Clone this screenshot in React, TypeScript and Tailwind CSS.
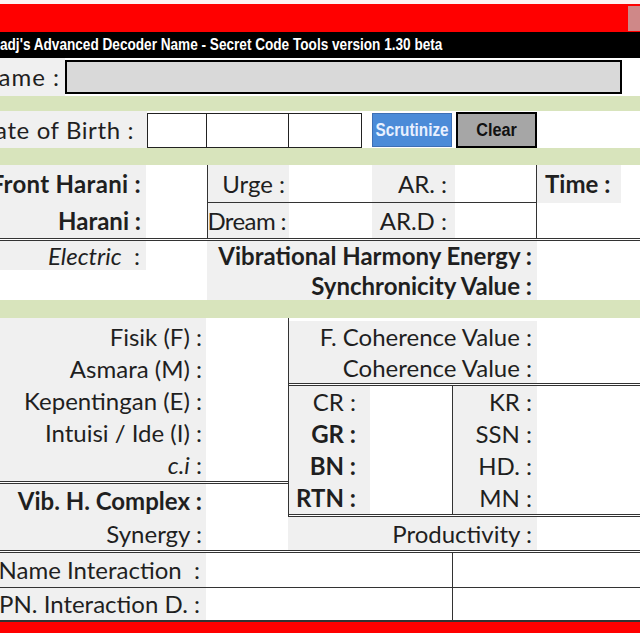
import type { ReactNode } from 'react';

// label cell: grey background, text pushed to the right edge
function Lab({ className = '', children }: { className?: string; children?: ReactNode }) {
  return (
    <div
      className={`flex items-center justify-end whitespace-nowrap bg-[#f0f0f0] leading-none ${className}`}
    >
      {children}
    </div>
  );
}

function DoubleLine({ className = '' }: { className?: string }) {
  return <div className={`h-[3px] border-y border-[#333] bg-white ${className}`} />;
}

export default function App() {
  return (
    <div className="h-[640px] w-[640px] overflow-hidden bg-white font-['Lato',sans-serif] text-[24px] text-[#1f1f1f]">
      {/* window chrome */}
      <div className="h-[4px] bg-[#fdf2f2]" />
      <div className="flex h-[28px] items-center justify-end bg-[#ff0000]">
        <div className="h-[25px] w-[12px] bg-[#cf8888]" />
      </div>
      <div className="flex h-[26px] items-center overflow-hidden bg-black">
        <span className="block origin-left scale-x-[0.85] whitespace-nowrap font-['Liberation_Sans',Arial,sans-serif] text-[16px] font-bold text-white">
          adj's Advanced Decoder Name - Secret Code Tools version 1.30 beta
        </span>
      </div>

      {/* Name */}
      <div className="flex h-[38px] items-center">
        <Lab className="h-full w-[65px] pr-[5px] tracking-[1px]">Name :</Lab>
        <div className="h-[34px] w-[557px] border-2 border-black bg-[#d9d9d9]" />
      </div>
      <div className="h-[15px] bg-[#d8e4bc]" />

      {/* Date of birth */}
      <div className="flex h-[37px]">
        <Lab className="h-full w-[147px] pr-[13px] tracking-[0.6px]">Date of Birth :</Lab>
        <div className="mt-[2px] flex h-[35px] border-y-[1.5px] border-[#222]">
          <div className="w-[60px] border-x-[1.5px] border-[#222]" />
          <div className="w-[82px] border-r-[1.5px] border-[#222]" />
          <div className="w-[73px] border-r-[1.5px] border-[#222]" />
        </div>
        <button className="ml-[10px] mt-[2px] flex h-[34px] w-[80px] items-center justify-center overflow-hidden border border-[#3d6fb5] bg-[#4b8bd8]">
          <span className="block scale-x-[0.85] whitespace-nowrap font-['Liberation_Sans',Arial,sans-serif] text-[18px] font-bold text-[#e8f0ff]">
            Scrutinize
          </span>
        </button>
        <button className="ml-[4px] mt-[1px] flex h-[36px] w-[81px] items-center justify-center border-2 border-black bg-[#a6a6a6]">
          <span className="block scale-x-[0.9] font-['Liberation_Sans',Arial,sans-serif] text-[18px] font-bold text-[#111]">
            Clear
          </span>
        </button>
      </div>
      <div className="h-[17px] bg-[#d8e4bc]" />

      {/* Harani */}
      <div className="grid h-[73px] grid-cols-[146px_61px_82px_83px_83px_82px_1fr] grid-rows-[38px_35px]">
        <Lab className="pr-[5px] font-bold tracking-[0.3px]">Front Harani :</Lab>
        <div />
        <Lab className="border-b border-l border-[#333] pr-[4px]">Urge :</Lab>
        <div className="border-b border-[#333]" />
        <Lab className="border-b border-[#333] pr-[8px]">AR. :</Lab>
        <div className="border-b border-r border-[#333]" />
        <div className="flex">
          <div className="flex w-[84px] items-center bg-[#f0f0f0] pl-[8px] font-bold leading-none">Time :</div>
        </div>
        <Lab className="pr-[5px] font-bold">Harani :</Lab>
        <div />
        <Lab className="border-l border-[#333] pr-[3px] tracking-[-0.6px]">Dream :</Lab>
        <div />
        <Lab className="pr-[8px]">AR.D :</Lab>
        <div className="border-r border-[#333]" />
        <div />
      </div>
      <DoubleLine />

      {/* Electric */}
      <div className="grid h-[59px] grid-cols-[146px_61px_330px_1fr] grid-rows-[29px_30px]">
        <Lab className="pr-[6px]">
          <span className="italic">Electric</span>&nbsp;&nbsp;:
        </Lab>
        <div className="row-span-2" />
        <div className="row-span-2 flex flex-col items-end justify-center bg-[#f0f0f0] pr-[5px] font-bold leading-[30px]">
          <span>Vibrational Harmony Energy :</span>
          <span>Synchronicity Value :</span>
        </div>
        <div className="row-span-2" />
        <div />
      </div>
      <div className="h-[18px] bg-[#d8e4bc]" />

      {/* Main values */}
      <div className="flex h-[232px]">
        <div className="flex w-[288px] flex-col">
          <div className="flex h-[163px]">
            <div className="flex w-[206px] flex-col bg-[#f0f0f0] pt-[3px]">
              <Lab className="h-[32px] pr-[4px]">Fisik (F) :</Lab>
              <Lab className="h-[32px] pr-[4px]">Asmara (M) :</Lab>
              <Lab className="h-[32px] pr-[4px]">Kepentingan (E) :</Lab>
              <Lab className="h-[32px] pr-[4px]">Intuisi / Ide (I) :</Lab>
              <Lab className="h-[32px] pr-[4px]">
                <span className="italic">c.i</span>&nbsp;:
              </Lab>
            </div>
          </div>
          <DoubleLine />
          <div className="flex h-[66px] w-[206px] flex-col bg-[#f0f0f0]">
            <Lab className="h-[33px] pr-[4px] font-bold">Vib. H. Complex :</Lab>
            <Lab className="h-[33px] pr-[4px]">Synergy :</Lab>
          </div>
        </div>

        <div className="flex flex-1 flex-col">
          <div className="flex h-[199px] flex-col border-l border-[#333]">
            <div className="h-[65px] pt-[3px]">
              <Lab className="h-[31px] w-[248px] pr-[5px]">F. Coherence Value :</Lab>
              <Lab className="h-[31px] w-[248px] pr-[5px]">Coherence Value :</Lab>
            </div>
            <DoubleLine />
            <div className="grid h-[128px] grid-cols-[81px_82px_85px_1fr] grid-rows-4">
              <Lab className="pr-[14px]">CR :</Lab>
              <div />
              <Lab className="border-l border-[#333] pr-[5px]">KR :</Lab>
              <div />
              <Lab className="pr-[14px] font-bold">GR :</Lab>
              <div />
              <Lab className="border-l border-[#333] pr-[5px]">SSN :</Lab>
              <div />
              <Lab className="pr-[14px] font-bold">BN :</Lab>
              <div />
              <Lab className="border-l border-[#333] pr-[5px]">HD. :</Lab>
              <div />
              <Lab className="pr-[14px] font-bold">RTN :</Lab>
              <div />
              <Lab className="border-l border-[#333] pr-[5px]">MN :</Lab>
              <div />
            </div>
            <DoubleLine />
          </div>
          <Lab className="h-[33px] w-[249px] pr-[5px]">Productivity :</Lab>
        </div>
      </div>
      <DoubleLine />

      {/* Interaction */}
      <div className="flex h-[34px]">
        <Lab className="w-[206px] pr-[6px]">Name Interaction&nbsp;&nbsp;:</Lab>
        <div className="w-[246px]" />
        <div className="flex-1 border-l border-[#333]" />
      </div>
      <div className="h-[1px] bg-[#333]" />
      <div className="flex h-[32px]">
        <Lab className="w-[206px] pr-[6px]">PN. Interaction D. :</Lab>
        <div className="w-[246px]" />
        <div className="flex-1 border-l border-[#333]" />
      </div>
      <div className="h-[2px] bg-[#333]" />
      <div className="h-[11px] bg-[#ff0000]" />
    </div>
  );
}
